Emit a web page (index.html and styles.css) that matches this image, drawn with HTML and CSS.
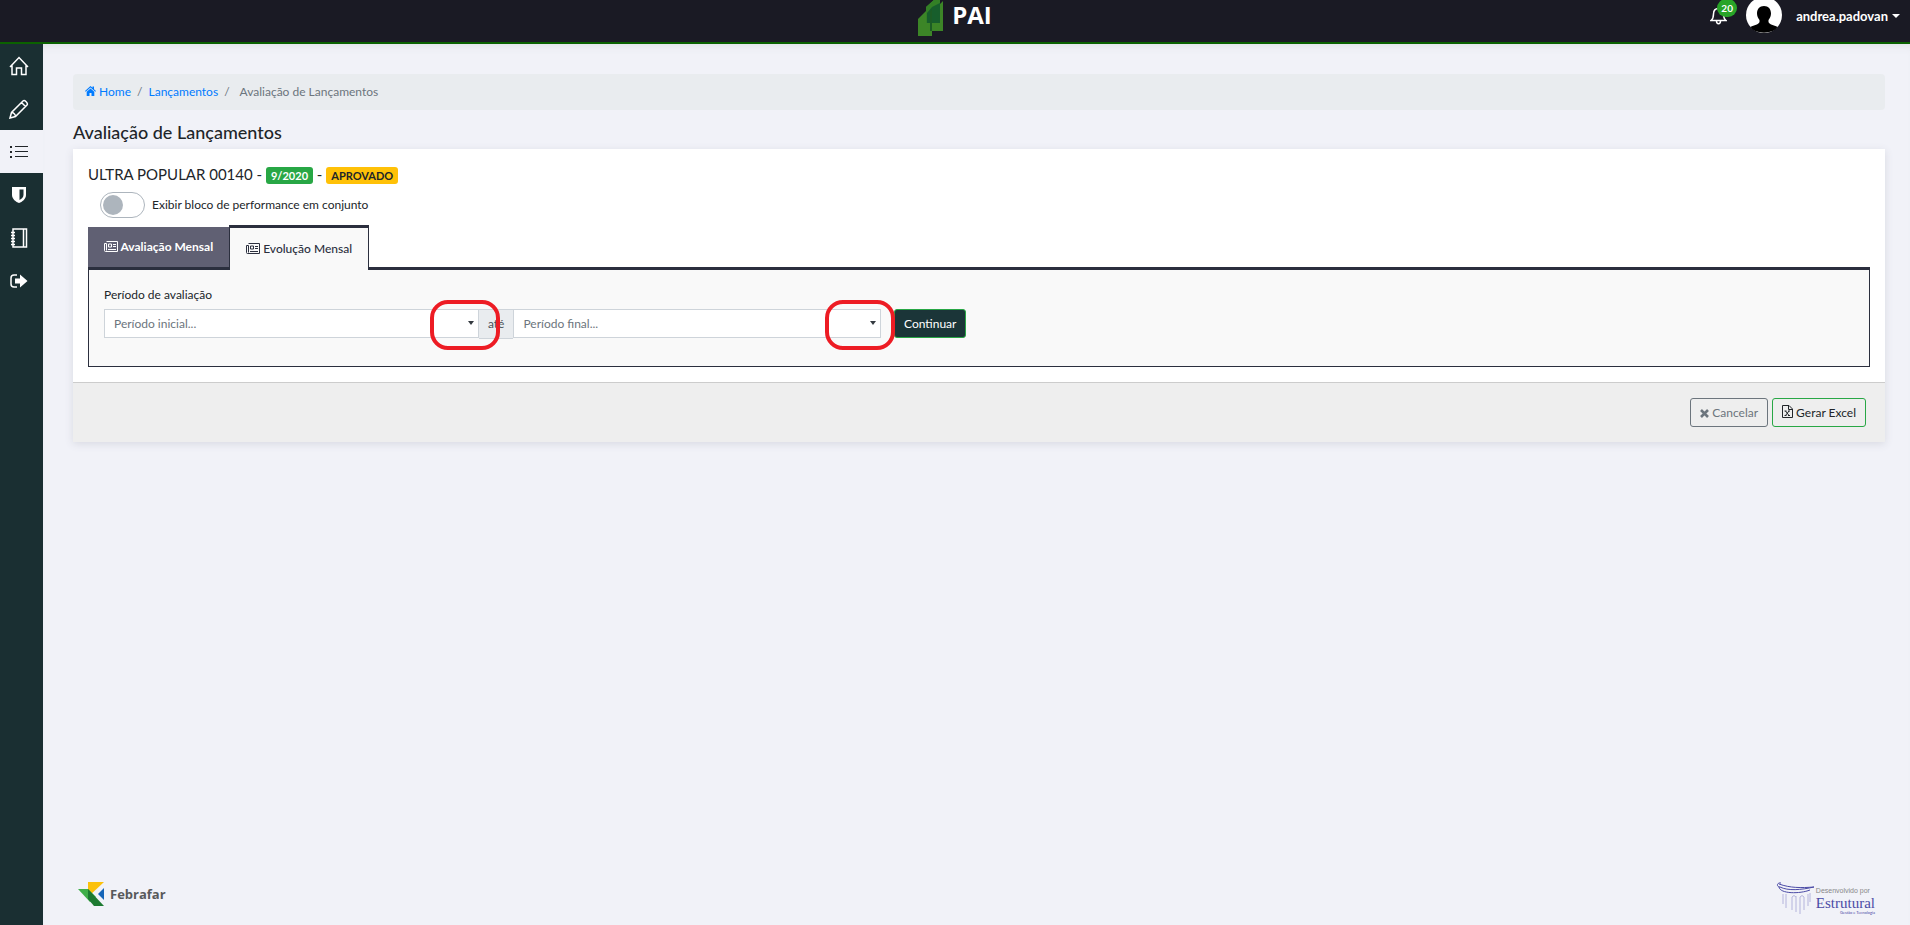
FILE: index.html
```html
<!DOCTYPE html>
<html lang="pt-BR">

<head>
    <meta charset="UTF-8">
    <meta name="viewport" content="width=device-width, initial-scale=1.0">
    <title>PAI - Avaliação de Lançamentos</title>
    <link rel="stylesheet" href="styles.css">
</head>

<body>
    <header class="topbar">
        <a href="#" class="brand">
            <svg width="26" height="38" viewBox="0 0 26 38">
                <path d="M0 20 L8 12 V8 L17 0 H22 V5 L25 2 V32 H14 V37 H0 Z" fill="#3c8527" />
                <path d="M8 8 L17 0 H22 V24 H8 Z" fill="#338026" />
                <path d="M9 14 L14 8 L22 4 V24 H9 Z" fill="#175e2c" />
                <path d="M12 13 L14 10 V32 H12 Z" fill="#1c5c25" />
            </svg>
            <span>PAI</span>
        </a>
        <div class="user-area">
            <button class="bell" aria-label="Notificações">
                <svg width="17" height="19" viewBox="0 0 17 19" fill="none" stroke="#fff" stroke-width="1.5">
                    <path d="M1 14.500 C3 13 3.500 11 3.500 8 C3.500 4.500 5.500 2.500 8.500 2.500 C11.500 2.500 13.500 4.500 13.500 8 C13.500 11 14 13 16 14.500 Z M6.500 15 C6.500 18.500 10.500 18.500 10.500 15" />
                </svg>
                <span class="count">20</span>
            </button>
            <svg class="avatar" width="36" height="36" viewBox="0 0 36 36">
                <circle cx="18" cy="18" r="18" fill="#fff" />
                <path d="M18 9 C22.500 9 25 12 25 16.500 C25 19 24 21 22.500 23 V25 C23 27.500 28 28 31.500 30 C27 37.500 9 37.500 4.500 30 C8 28 13 27.500 13.500 25 V23 C12 21 11 19 11 16.500 C11 12 13.500 9 18 9 Z" fill="#000" />
            </svg>
            <button class="user-name">andrea.padovan</button>
        </div>
    </header>

    <div class="wrapper">
        <nav class="sidebar">
            <a href="#" aria-label="Home">
                <svg width="20" height="20" viewBox="0 0 20 20" fill="none" stroke="currentColor" stroke-width="1.500">
                    <path d="M1 11 L10 1.500 L19 11 M3 9.500 V18.500 H7.500 V12 H12.500 V18.500 H17 V9.500" />
                </svg>
            </a>
            <a href="#" aria-label="Editar">
                <svg width="20" height="20" viewBox="0 0 20 20" fill="none" stroke="currentColor" stroke-width="1.500">
                    <path d="M1 19 L2.500 13.500 L14 2 C15.500 .5 19.500 4 18 6 L6.500 17.500 Z M2.500 13.500 C4.500 13.500 6.500 15.500 6.500 17.500 M12.500 3.500 L16.500 7.500" />
                </svg>
            </a>
            <a href="#" class="active" aria-label="Lançamentos">
                <svg width="20" height="14" viewBox="0 0 20 14" fill="currentColor">
                    <path d="M1 1h2v2H1z M1 6h2v2H1z M1 11h2v2H1z M6 1h13v1H6z M6 6h13v1H6z M6 11h13v1H6z" />
                </svg>
            </a>
            <a href="#" aria-label="Segurança">
                <svg width="20" height="18" viewBox="-2 0 20 18">
                    <path d="M1 1 H15 V9 C15 13 11 16 8 17 C5 16 1 13 1 9 Z" fill="currentColor" />
                    <path d="M8.500 3.500 H12.500 V9 C12.500 11 10.500 13 8.500 14 Z" fill="#1a2f32" />
                </svg>
            </a>
            <a href="#" aria-label="Caderno">
                <svg width="20" height="20" viewBox="-1 0 20 20" fill="none" stroke="currentColor" stroke-width="1.500">
                    <path d="M3 1 H16.500 V19 H3 Z M13.500 1 V19 M1 4.500 H5 M1 7.500 H5 M1 10.500 H5 M1 13.500 H5 M1 16.500 H5" />
                </svg>
            </a>
            <a href="#" aria-label="Sair">
                <svg width="20" height="14" viewBox="-1 0 20 14">
                    <path d="M7 1 H4 Q1 1 1 4 V10 Q1 13 4 13 H7" fill="none" stroke="currentColor" stroke-width="1.500" />
                    <path d="M5 4.500 H10 V.5 L17.500 7 L10 13.500 V9.500 H5 Z" fill="currentColor" />
                </svg>
            </a>
        </nav>

        <div class="page">
            <main>
                <nav class="breadcrumb">
                    <a href="#">
                        <svg width="11" height="10" viewBox="0 0 11 10" fill="currentColor">
                            <path d="M0 5 L5.500 0 L7.500 1.800 V.5 H9 V3.200 L11 5 L10.300 5.800 L5.500 1.500 L.7 5.800 Z M1.700 5.800 L5.500 2.500 L9.300 5.800 V10 H6.500 V7 H4.500 V10 H1.700 Z" />
                        </svg>
                        Home</a>
                    <span>/</span>
                    <a href="#">Lançamentos</a>
                    <span>/</span>
                    <span class="current">Avaliação de Lançamentos</span>
                </nav>

                <h1>Avaliação de Lançamentos</h1>

                <section class="card">
                    <div class="card-body">
                        <h2>ULTRA POPULAR 00140 - <span class="badge green">9/2020</span> - <span class="badge yellow">APROVADO</span></h2>

                        <label class="switch">
                            <input type="checkbox">
                            Exibir bloco de performance em conjunto
                        </label>

                        <div class="tabs">
                            <button class="tab">
                                <svg width="14" height="11" viewBox="0 0 14 11" fill="none" stroke="currentColor">
                                    <path d="M2.500 .5 H13.500 V10.500 H1.500 Q.5 10.500 .5 9.500 V2.500 H2.500 V9.500 M4.500 3 H7.500 V6 H4.500 Z M9 3.500 H12 M9 5.500 H12 M4 8.500 H12" />
                                </svg>
                                Avaliação Mensal</button>
                            <button class="tab active">
                                <svg width="14" height="11" viewBox="0 0 14 11" fill="none" stroke="currentColor">
                                    <path d="M2.500 .5 H13.500 V10.500 H1.500 Q.5 10.500 .5 9.500 V2.500 H2.500 V9.500 M4.500 3 H7.500 V6 H4.500 Z M9 3.500 H12 M9 5.500 H12 M4 8.500 H12" />
                                </svg>
                                Evolução Mensal</button>
                        </div>

                        <div class="tab-content">
                            <label for="inicio">Período de avaliação</label>
                            <div class="period">
                                <div class="input-group">
                                    <div class="select-box">
                                        <select id="inicio">
                                            <option>Período inicial...</option>
                                        </select>
                                        <span class="mark"></span>
                                    </div>
                                    <span class="addon">até</span>
                                    <div class="select-box end">
                                        <select aria-label="Período final">
                                            <option>Período final...</option>
                                        </select>
                                        <span class="mark"></span>
                                    </div>
                                </div>
                                <button class="btn continue">Continuar</button>
                            </div>
                        </div>
                    </div>

                    <div class="card-footer">
                        <button class="btn cancel">
                            <svg width="9" height="9" viewBox="0 0 9 9" stroke="currentColor" stroke-width="2.600">
                                <path d="M1 1 L8 8 M8 1 L1 8" />
                            </svg>
                            Cancelar</button>
                        <button class="btn excel">
                            <svg width="11" height="13" viewBox="0 0 11 13" fill="none" stroke="currentColor">
                                <path d="M.5 .5 H7 L10.500 4 V12.500 H.5 Z M6.500 .5 V4.500 H10.500 M3.500 6 L7 10.500 M7 6 L3.500 10.500 M2.500 6 H4.500 M6 6 H8 M2.500 10.500 H4.500 M6 10.500 H8" />
                            </svg>
                            Gerar Excel</button>
                    </div>
                </section>
            </main>

            <footer class="footer">
                <a href="#" class="febrafar">
                    <svg width="26" height="24" viewBox="0 0 26 24">
                        <path d="M10 0 H26 L10 15 Z" fill="#fbc10b" />
                        <path d="M0 7 H10 L18 15 L12 20 Z" fill="#3fae49" />
                        <path d="M10 7 L26 24 H16 L10 17 Z" fill="#1d7a31" />
                        <path d="M26 6 V18 L20 12 Z" fill="#1565b8" />
                    </svg>
                    <span>Febrafar</span>
                </a>
                <a href="#" class="estrutural">
                    <svg width="38" height="34" viewBox="0 0 38 34" fill="none">
                        <path d="M5 1 C1 0 0 5 4 5 C12 9 25 8 38 5 C25 6 14 6 3 2 M3 5 C4 12 24 12 34 8" stroke="#4b4ba6" />
                        <path d="M7 12 V22 M10 12 V26 M16 28 V15 Q18 12 20 15 M20 14 V30 M24 32 V15 Q26 12 28 15 V28 M32 12 V24 M34 11 V20" stroke="#b4b4dc" />
                    </svg>
                    <span class="credit">
                        <small>Desenvolvido por</small>
                        <strong>Estrutural</strong>
                        <em>Gestão e Tecnologia</em>
                    </span>
                </a>
            </footer>
        </div>
    </div>
</body>

</html>
```

FILE: styles.css
```css
* {
    margin: 0;
    padding: 0;
    box-sizing: border-box;
}

body {
    display: flex;
    flex-direction: column;
    min-height: 100vh;
    background: #f1f2f8;
    color: #212529;
    font-family: "Segoe UI", Lato, "Open Sans", sans-serif;
    font-size: 12px;
    line-height: 18px;
}

a {
    text-decoration: none;
}

button,
select {
    font: inherit;
    cursor: pointer;
}

svg {
    flex-shrink: 0;
}

/* top bar */
.topbar {
    display: grid;
    grid-template-columns: 1fr auto 1fr;
    align-items: center;
    height: 44px;
    padding: 0 10px 12px;
    background: #1a1a24;
    border-bottom: 2px solid #0b6100;
}

.brand {
    grid-column: 2;
    display: flex;
    align-items: center;
    gap: 8px;
    height: 30px;
    color: #fff;
    font-family: "Open Sans", sans-serif;
    font-size: 24px;
    font-weight: 700;
}

.brand svg {
    margin-top: 6px;
}

.user-area {
    display: flex;
    align-items: center;
    justify-content: flex-end;
    height: 30px;
}

.bell {
    position: relative;
    display: flex;
    margin-right: 19px;
    background: none;
    border: none;
}

.bell .count {
    position: absolute;
    top: -7px;
    left: 7px;
    width: 20px;
    height: 18px;
    border-radius: 10px;
    background: #28a428;
    color: #fff;
    font-size: 10px;
    font-weight: 700;
    text-align: center;
}

.user-name {
    display: flex;
    align-items: center;
    gap: 4px;
    margin-left: 14px;
    padding-top: 2px;
    background: none;
    border: none;
    color: #fff;
    font-size: 13px;
    font-weight: 700;
}

.user-name::after {
    content: "";
    border: 4px solid transparent;
    border-top-color: #fff;
    border-bottom: none;
}

/* side menu */
.wrapper {
    display: flex;
    flex: 1;
}

.sidebar {
    width: 43px;
    background: #1a2f32;
}

.sidebar a {
    display: flex;
    align-items: center;
    height: 43px;
    padding-left: 9px;
    color: #fff;
}

.sidebar a.active {
    background: #f1f2f8;
    color: #212529;
}

/* page */
.page {
    display: flex;
    flex: 1;
    flex-direction: column;
    justify-content: space-between;
    min-width: 0;
    padding: 30px 25px 9px 30px;
    box-shadow: inset 0 8px 8px -6px #dfe0e6;
}

.breadcrumb {
    display: flex;
    align-items: center;
    gap: 6px;
    height: 36px;
    padding: 0 12px;
    border-radius: 4px;
    background: #e9ecef;
    color: #6c757d;
}

.breadcrumb a {
    color: #007bff;
}

.breadcrumb .current {
    margin-left: 4px;
}

h1 {
    margin: 10px 0 5px;
    font-size: 18px;
    font-weight: 500;
    line-height: 24px;
}

.card {
    background: #fff;
    box-shadow: 0 2px 8px #d8d9e2;
}

.card-body {
    padding: 15px;
}

h2 {
    font-size: 15px;
    font-weight: 400;
    line-height: 20px;
}

.badge {
    padding: 2px 5px;
    border-radius: 3px;
    font-size: 11px;
    font-weight: 700;
    line-height: 14px;
}

.badge.green {
    background: #28a745;
    color: #fff;
}

.badge.yellow {
    background: #ffc107;
}

.switch {
    display: flex;
    align-items: center;
    gap: 7px;
    margin: 8px 0 7px 12px;
}

.switch input {
    appearance: none;
    width: 45px;
    height: 26px;
    padding: 2px;
    border: 1px solid #adb5bd;
    border-radius: 13px;
}

.switch input::before {
    content: "";
    display: block;
    width: 20px;
    height: 20px;
    border-radius: 50%;
    background: #adb5bd;
}

.switch input:checked::before {
    margin-left: auto;
    background: #28a745;
}

.tabs {
    display: flex;
    align-items: flex-end;
}

.tab {
    height: 43px;
    padding: 0 16px;
    background: #606073;
    border: none;
    border-bottom: 3px solid #2b2f3e;
    color: #fff;
    font-weight: 700;
}

.tab svg,
.btn svg {
    vertical-align: -1px;
}

.tab.active {
    height: 45px;
    background: #f9f9f9;
    border: 1px solid #2b2f3e;
    border-top-width: 3px;
    border-bottom: none;
    color: #2b2f3e;
    font-weight: 500;
}

.tabs::after {
    content: "";
    flex: 1;
    border-bottom: 3px solid #2b2f3e;
}

.tab-content {
    padding: 16px 15px 27px;
    background: #f9f9f9;
    border: 1px solid #2b2f3e;
    border-top: none;
}

.tab-content label {
    display: block;
    margin-bottom: 5px;
}

.period {
    display: flex;
    gap: 13px;
}

.input-group {
    display: flex;
    width: 44.4%;
}

.select-box {
    position: relative;
    flex: 51;
}

.select-box.end {
    flex: 50;
}

.select-box select {
    display: block;
    appearance: none;
    width: 100%;
    height: 29px;
    padding: 0 9px;
    background: #fff;
    border: 1px solid #ced4da;
    color: #6c757d;
}

.select-box::after {
    content: "";
    position: absolute;
    top: 12px;
    right: 5px;
    border: 3px solid transparent;
    border-top: 4px solid #343a40;
    border-bottom: none;
    pointer-events: none;
}

/* red ring around each arrow */
.mark {
    position: absolute;
    z-index: 2;
    top: -9px;
    right: -21px;
    width: 70px;
    height: 50px;
    border: 4px solid #ed1c24;
    border-radius: 18px;
    pointer-events: none;
}

.end .mark {
    right: -14px;
}

.addon {
    padding: 5px 9px;
    background: #e9ecef;
    border: solid #ced4da;
    border-width: 1px 0;
    color: #495057;
}

.btn {
    height: 29px;
    padding: 0 9px;
    background: transparent;
    border: 1px solid;
    border-radius: 3px;
}

.btn.continue {
    background: #1b3538;
    border-color: #28a745;
    color: #fff;
}

.card-footer {
    display: flex;
    justify-content: flex-end;
    gap: 4px;
    padding: 15px 19px;
    background: #eee;
    border-top: 1px solid #ccc;
}

.btn.cancel {
    border-color: #6c757d;
    color: #6c757d;
}

.btn.excel {
    border-color: #28a745;
    color: #212529;
}

/* footer logos */
.footer {
    display: flex;
    align-items: flex-start;
    justify-content: space-between;
    padding: 0 10px 0 5px;
}

.febrafar {
    display: flex;
    align-items: center;
    gap: 6px;
    color: #58595b;
    font-family: "Open Sans", sans-serif;
    font-size: 13px;
    font-weight: 700;
}

.estrutural {
    display: flex;
    gap: 2px;
}

.credit {
    display: flex;
    flex-direction: column;
    padding-top: 4px;
    color: #4b4ba6;
}

.credit small {
    color: #888;
    font-family: "Liberation Sans", Arial, sans-serif;
    font-size: 7px;
    line-height: 10px;
}

.credit strong {
    font-family: "Liberation Serif", serif;
    font-size: 15px;
    font-weight: 400;
    line-height: 14px;
}

.credit em {
    font-size: 4px;
    font-style: normal;
    line-height: 6px;
    text-align: right;
}
```
